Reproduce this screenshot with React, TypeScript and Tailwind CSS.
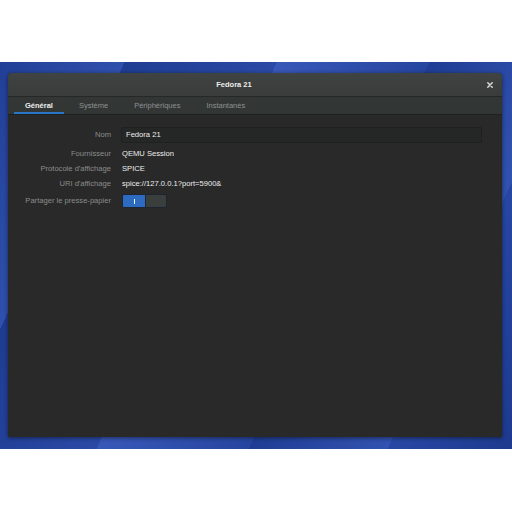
import React from 'react';

type Row = { label: string; value: string };

const rows: Row[] = [
  { label: 'Fournisseur', value: 'QEMU Session' },
  { label: "Protocole d'affichage", value: 'SPICE' },
  { label: "URI d'affichage", value: 'spice://127.0.0.1?port=5900&' },
];

const tabs = ['Général', 'Système', 'Périphériques', 'Instantanés'];

function CloseIcon() {
  return (
    <svg width="6" height="6" viewBox="0 0 6 6" className="block">
      <path d="M0.8 0.8L5.2 5.2M5.2 0.8L0.8 5.2" stroke="#d6d8d7" strokeWidth="1.5" strokeLinecap="round" />
    </svg>
  );
}

function Switch() {
  return (
    <div className="flex h-[14px] w-[45px] overflow-hidden rounded-[2px] border border-[#1c2633]">
      <div className="flex w-[22px] items-center justify-center bg-[#2c6bbf]">
        <div className="h-[5px] w-[1px] bg-white" />
      </div>
      <div className="flex-1 border-l border-[#22262a] bg-[#3a3e3d]" />
    </div>
  );
}

export default function App() {
  return (
    <div className="flex h-[512px] w-[512px] flex-col bg-white font-['Liberation_Sans',Arial,sans-serif]">
      <div className="h-[62px]" />
      <div className="h-[387px] bg-[#2a48a3] bg-[linear-gradient(115deg,#223f96_0%,#2f50ad_18%,#1f3c92_18%,#2a4aa6_40%,#3858b8_40%,#2645a0_62%,#203d94_62%,#3152b0_82%,#2747a4_82%,#1e3a8f_100%)] pl-[8px] pr-[10px] pt-[11px]">
        <div className="flex h-[364px] flex-col overflow-hidden rounded-t-[4px] bg-[#292929] shadow-[0_1px_4px_rgba(0,0,0,0.5)]">
          {/* title bar */}
          <div className="flex h-[24px] items-center border-b border-[#252827] bg-[linear-gradient(#3f4342,#393c3b)]">
            <div className="flex flex-1 justify-center pr-[6px]">
              <span className="text-[7.5px] font-bold text-[#eeeeec]">Fedora 21</span>
            </div>
            <div className="flex w-[36px] items-center justify-center pl-[12px]">
              <CloseIcon />
            </div>
          </div>
          {/* tabs */}
          <div className="flex h-[18px] items-stretch gap-[4px] border-b border-[#1f2121] bg-[#323635] pl-[6px]">
            {tabs.map((t, i) => (
              <div
                key={t}
                className={
                  i === 0
                    ? 'flex items-center border-b-2 border-[#2a76c6] px-[11px] pt-[2px] text-[7.5px] font-bold text-[#eeeeec]'
                    : 'flex items-center border-b-2 border-transparent px-[11px] pt-[2px] text-[7.5px] text-[#8e9291]'
                }
              >
                {t}
              </div>
            ))}
          </div>
          {/* content */}
          <div className="flex flex-col pt-[12px] text-[7.6px]">
            <div className="flex h-[16px] items-center">
              <div className="w-[103px] text-right text-[#8a8d8c]">Nom</div>
              <div className="ml-[10px] mr-[20px] flex h-[16px] flex-1 items-center rounded-[2px] border border-[#1f2020] bg-[#252626] pl-[4px] text-[#eeeeec]">
                Fedora 21
              </div>
            </div>
            <div className="mt-[4px] flex flex-col gap-[1px]">
              {rows.map((r) => (
                <div key={r.label} className="flex h-[14px] items-center">
                  <div className="w-[103px] text-right text-[#8a8d8c]">{r.label}</div>
                  <div className="ml-[11px] text-[#eeeeec]">{r.value}</div>
                </div>
              ))}
            </div>
            <div className="mt-[3px] flex h-[14px] items-center">
              <div className="w-[103px] text-right text-[#8a8d8c]">Partager le presse-papier</div>
              <div className="ml-[11px]">
                <Switch />
              </div>
            </div>
          </div>
        </div>
      </div>
    </div>
  );
}
